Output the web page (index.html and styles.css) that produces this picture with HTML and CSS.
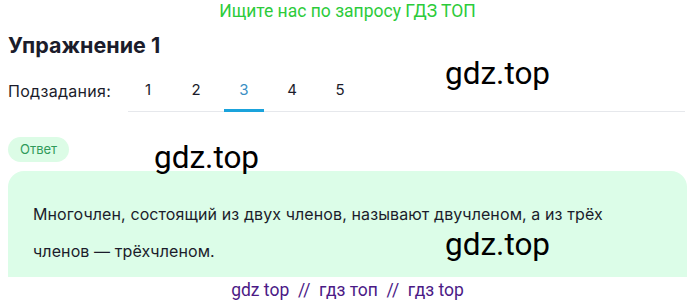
FILE: index.html
```html
<!DOCTYPE html>
<html lang="ru">
<head>
    <meta charset="UTF-8">
    <meta name="viewport" content="width=device-width, initial-scale=1.0">
    <title>Упражнение 1</title>

    <link rel="stylesheet" href="styles.css">
</head>
<body>
    <p class="promo">Ищите нас по запросу ГДЗ ТОП</p>

    <h1 class="title">Упражнение 1</h1>

    <div class="subtasks">
        <span class="subtasks-label">Подзадания:</span>
        <div class="tabs">
            <a class="tab">1</a>
            <a class="tab">2</a>
            <a class="tab tab-active">3</a>
            <a class="tab">4</a>
            <a class="tab">5</a>
        </div>
    </div>

    <span class="badge">Ответ</span>

    <div class="answer">
        <p>Многочлен, состоящий из двух членов, называют двучленом, а из трёх членов — трёхчленом.</p>
    </div>

    <p class="footer">gdz top &nbsp;//&nbsp; гдз топ &nbsp;//&nbsp; гдз top</p>

    <!-- watermarks -->
    <span class="mark mark-1">gdz.top</span>
    <span class="mark mark-2">gdz.top</span>
    <span class="mark mark-3">gdz.top</span>
</body>
</html>
```

FILE: styles.css
```css
body{
    margin: 0;
    padding: 0 8px;
    font-family: Inter, "Noto Sans", sans-serif;
    color: #1b1c2b;
    background: #fff;
    position: relative;
    height: 306px;
    overflow: hidden;
}
.promo{
    margin: 0;
    padding-top: 1px;
    text-align: center;
    font-family: Roboto, Arial, sans-serif;
    font-size: 17.5px;
    line-height: 21px;
    color: #2ccb3a;
}
.title{
    margin: 9px 0 0;
    font-size: 21.5px;
    line-height: 28px;
    font-weight: 700;
}
.subtasks{
    display: flex;
    align-items: flex-end;
    margin-top: 21px;
}
.subtasks-label{
    font-size: 16px;
    letter-spacing: 0.3px;
    line-height: 20px;
    padding-bottom: 11px;
    width: 120px;
}
.tabs{
    display: flex;
    flex: 1;
    border-bottom: 1px solid #e6e8ec;
    margin-right: 2px;
}
.tab{
    width: 40px;
    margin-right: 8px;
    text-align: center;
    font-size: 15px;
    line-height: 20px;
    padding-bottom: 9px;
    border-bottom: 3px solid transparent;
    margin-bottom: -1px;
}
.tab-active{
    color: #3a8fc4;
    border-bottom-color: #1aa3dc;
}
.badge{
    display: inline-block;
    margin-top: 25px;
    padding: 0 12px;
    height: 25px;
    line-height: 25px;
    font-size: 13px;
    color: #2f9a5a;
    background: #dcfce6;
    border-radius: 13px;
}
.answer{
    margin-top: 9px;
    background: #dcfde8;
    border-radius: 16px 16px 0 0;
    padding: 25px 25px 16px;
    height: 65px;
}
.answer p{
    margin: 0;
    font-size: 16px;
    letter-spacing: 0.1px;
    line-height: 37px;
    max-width: 615px;
}
.footer{
    margin: 0;
    text-align: center;
    font-family: Roboto, Arial, sans-serif;
    font-size: 17.5px;
    line-height: 26px;
    color: #4b1a86;
}
.mark{
    position: absolute;
    font-family: Roboto, Arial, sans-serif;
    font-size: 31.5px;
    color: #000;
    line-height: 36px;
}
.mark-1{ left: 445px; top: 56px; }
.mark-2{ left: 154px; top: 140px; }
.mark-3{ left: 445px; top: 227px; }
```
